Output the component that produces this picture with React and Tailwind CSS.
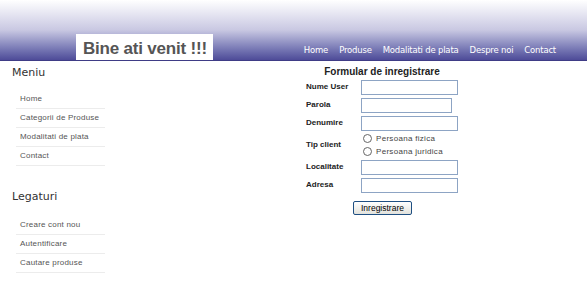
const menu = ["Home", "Categorii de Produse", "Modalitati de plata", "Contact"];
const links = ["Creare cont nou", "Autentificare", "Cautare produse"];
const nav = ["Home", "Produse", "Modalitati de plata", "Despre noi", "Contact"];

const Field = ({ label, width = "w-[97px]" }) => (
  <div className="flex items-center h-[18px]">
    <span className="w-[55px] text-[8px] font-bold text-[#222]">{label}</span>
    <input
      className={`${width} h-[15px] bg-white border border-[#8da4c4] outline-none`}
    />
  </div>
);

const Radio = ({ label }) => (
  <div className="flex items-center gap-[4px] h-[13px]">
    <span className="w-[9px] h-[9px] rounded-full border border-[#666] bg-white" />
    <span className="text-[8px] text-[#444] tracking-[0.3px]">{label}</span>
  </div>
);

const App = () => {
  return (
    <div
      className="w-[587px] h-[281px] bg-white overflow-hidden"
      style={{ fontFamily: '"Liberation Sans", Arial, sans-serif' }}
    >
      <header className="h-[61px] flex items-end bg-gradient-to-b from-white via-[#c9c8e2] to-[#4e4b98] border-b border-[#3f3c86]">
        <div className="ml-[76px] w-[137px] h-[26px] bg-white pl-[7px] pt-[3px] flex items-center">
          <span className="text-[17px] font-bold text-[#555] leading-none whitespace-nowrap tracking-[-0.2px]">
            Bine ati venit !!!
          </span>
        </div>
        <nav
          className="ml-auto mr-[31px] mb-[3px] flex gap-[11px] text-[8.5px] text-white tracking-[-0.2px]"
          style={{ fontFamily: '"DejaVu Sans", Verdana, sans-serif' }}
        >
          {nav.map((n) => (
            <span key={n}>{n}</span>
          ))}
        </nav>
      </header>

      <div className="flex">
        <aside className="w-[290px] pl-[12px] pt-[5px]">
          <h2
            className="text-[11px] text-[#333] leading-[14px]"
            style={{ fontFamily: '"DejaVu Sans", Verdana, sans-serif' }}
          >
            Meniu
          </h2>
          <ul className="ml-[4px] w-[89px] mt-[10px]">
            {menu.map((m) => (
              <li
                key={m}
                className="h-[19px] flex items-center pl-[4px] text-[8px] text-[#555] tracking-[0.2px] border-b border-[#ececec]"
              >
                {m}
              </li>
            ))}
          </ul>
          <h2
            className="mt-[24px] text-[11px] text-[#333] leading-[14px]"
            style={{ fontFamily: '"DejaVu Sans", Verdana, sans-serif' }}
          >
            Legaturi
          </h2>
          <ul className="ml-[4px] w-[89px] mt-[12px]">
            {links.map((m) => (
              <li
                key={m}
                className="h-[19px] flex items-center pl-[4px] text-[8px] text-[#555] tracking-[0.2px] border-b border-[#ececec]"
              >
                {m}
              </li>
            ))}
          </ul>
        </aside>

        <form className="pl-[16px] pt-[3px]">
          <h3 className="w-[152px] h-[14px] text-center text-[10px] font-bold text-[#222] whitespace-nowrap">
            Formular de inregistrare
          </h3>
          <Field label="Nume User" />
          <Field label="Parola" width="w-[91px]" />
          <Field label="Denumire" />
          <div className="flex items-center h-[26px]">
            <span className="w-[57px] text-[8px] font-bold text-[#222]">Tip client</span>
            <div className="flex flex-col">
              <Radio label="Persoana fizica" />
              <Radio label="Persoana juridica" />
            </div>
          </div>
          <Field label="Localitate" />
          <Field label="Adresa" />
          <button
            type="button"
            className="ml-[47px] mt-[1px] w-[59px] h-[14px] rounded-[2px] border border-[#1f4f82] bg-gradient-to-b from-white to-[#e2e2dc] text-[8.5px] text-black leading-none"
          >
            Inregistrare
          </button>
        </form>
      </div>
    </div>
  );
};

export default App;
